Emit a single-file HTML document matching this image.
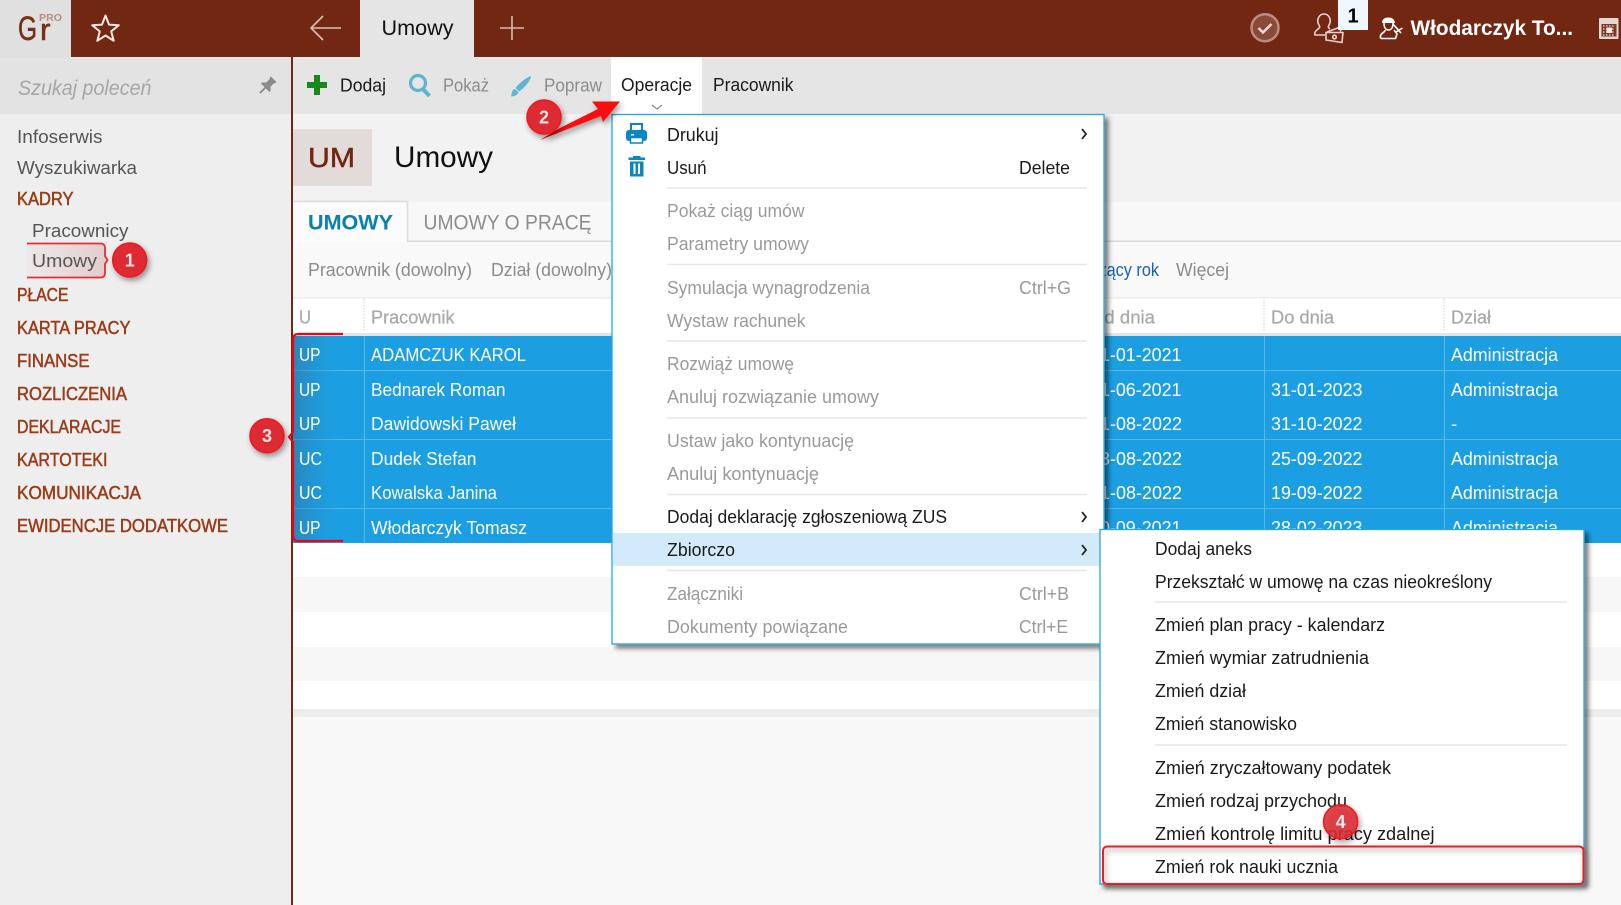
<!DOCTYPE html>
<html lang="pl"><head><meta charset="utf-8"><title>Umowy</title>
<style>
html,body{margin:0;padding:0;background:#f8f8f8;overflow:hidden}
svg{display:block}
text{font-family:"Liberation Sans",sans-serif;font-size:18.5px;fill:#1a1a1a}
.g{fill:#8b8b8b}.d{fill:#9a9a9a}.s{fill:#9b3b17;stroke:#9b3b17;stroke-width:.5px;font-size:18px}
.n{fill:#555}.w{fill:#fff}.h{fill:#a8a8a8;stroke:#a8a8a8;stroke-width:.25px}
.b{fill:#fbe6e6;font-size:18px;font-weight:700;text-anchor:middle}
</style></head><body>
<svg xmlns="http://www.w3.org/2000/svg" width="1621" height="905" viewBox="0 0 1621 905">
<defs>
<filter id="ms" x="-5%" y="-5%" width="112%" height="112%"><feDropShadow dx="4" dy="4" stdDeviation="2.5" flood-color="#000" flood-opacity=".5"/></filter>
<filter id="bs" x="-40%" y="-40%" width="190%" height="190%"><feDropShadow dx="2" dy="3" stdDeviation="3" flood-color="#000" flood-opacity=".4"/></filter>
<linearGradient id="br" x1="0" x2="1" y1="0" y2="0"><stop offset="0" stop-color="#3a6f9a" stop-opacity=".55"/><stop offset="1" stop-color="#1b9fe2" stop-opacity="0"/></linearGradient>
<linearGradient id="cu" x1="0" x2="1" y1="0" y2="0"><stop offset="0" stop-color="#d9b3b3" stop-opacity=".1"/><stop offset="1" stop-color="#d9a8a8" stop-opacity=".5"/></linearGradient>
</defs>

<!-- base -->
<rect width="1621" height="905" fill="#f8f8f8"/>
<rect y="57" width="291" height="848" fill="#eeeeee"/>
<rect y="57" width="291" height="57" fill="#e3e3e3"/>
<rect x="291" y="57" width="2" height="848" fill="#722712"/>
<rect x="293" y="57" width="1328" height="57" fill="#e5e5e5"/>
<rect x="293" y="114" width="1328" height="88" fill="#f2f2f2"/>

<!-- top bar -->
<rect width="1621" height="57" fill="#722712"/>
<rect width="71" height="57" fill="#e0e0e0"/>
<rect x="360" width="114" height="57" fill="#e5e5e5"/>
<text x="18" y="40" textLength="19" lengthAdjust="spacingAndGlyphs" style="font-size:34px;fill:#7a3018;stroke:#7a3018;stroke-width:.6px">G</text>
<text x="40" y="40" textLength="10.500" lengthAdjust="spacingAndGlyphs" style="font-size:31px;fill:#7a3018;stroke:#7a3018;stroke-width:.6px">r</text>
<text x="39" y="21" textLength="23" lengthAdjust="spacingAndGlyphs" style="font-size:10.500px;fill:#b58c81;font-weight:700">PRO</text>
<polygon points="105.500,15.500 109,24.600 118.800,25.200 111.200,31.400 113.700,40.800 105.500,35.500 97.300,40.800 99.800,31.400 92.200,25.200 102,24.600" fill="none" stroke="#f4e8e3" stroke-width="2" stroke-linejoin="round"/>
<path d="M341 28H311M323 16L311 28L323 40" fill="none" stroke="#dcbfb4" stroke-width="1.600"/>
<text x="381.500" y="35" textLength="72" lengthAdjust="spacingAndGlyphs" style="font-size:21px;fill:#111">Umowy</text>
<path d="M512 16V40M500 28H524" stroke="#d8bbae" stroke-width="1.600" fill="none"/>
<circle cx="1265" cy="27.700" r="13.500" fill="#8b4a37" stroke="#b98d80" stroke-width="2.500"/>
<path d="M1258.500 28l4.500 4.500 8.500-8.500" fill="none" stroke="#e6dcd8" stroke-width="2.500"/>
<g fill="none" stroke="#e8d2cb" stroke-width="1.600">
<path d="M1319 25c-3-5 0-11 5-11s8 6 5 11c-1 2-1 3 1 4"/>
<path d="M1319 25c1 2 1 3-1 4-2 2-4 3-3 6h10"/>
<path d="M1327 32l12-4.500 2 4"/>
<path d="M1326 32.500l17 0 -1 10 -16-2.500z" fill="#722712"/>
<circle cx="1334.500" cy="37" r="1.800"/>
</g>
<rect x="1338" y="0" width="30" height="30" fill="#eef7fd"/>
<text x="1353" y="22.500" text-anchor="middle" style="font-size:20px;font-weight:700;fill:#000">1</text>
<path d="M1382 23c0-4 3-5.500 6.500-5.500s6 1.500 6.500 5.500z" fill="#fff"/>
<g fill="none" stroke="#fff" stroke-width="1.600">
<path d="M1384 23c0 4 1.500 7 4.500 7s4.500-3 4.500-7"/>
<path d="M1385 30c0 2-2 2.500-3.500 4-1.500 1.500-1.500 4 0 4.500h14l1.500-4.500-3-4"/>
<path d="M1393 24l8 9M1396 32l6.500-4"/>
</g>
<text x="1410.500" y="35" textLength="162.500" lengthAdjust="spacingAndGlyphs" style="font-size:21px;font-weight:700;fill:#fff">Włodarczyk To...</text>
<rect x="1599" y="18" width="19.500" height="21" rx="1" fill="#e4d7d2"/>
<rect x="1601.500" y="24" width="15" height="12.500" fill="#7a3a28"/>
<path d="M1603 26h12M1603 29h12M1603 32h12M1603 35h12" stroke="#d9c4bc" stroke-width="1.400" stroke-dasharray="1.500 1.500" fill="none"/>
<rect x="1606.500" y="27.500" width="5.500" height="5.500" fill="#efe6e2"/>

<!-- sidebar -->
<text x="18" y="95" textLength="133.500" lengthAdjust="spacingAndGlyphs" style="font-size:21px;font-style:italic;fill:#a6a6a6">Szukaj poleceń</text>
<g transform="translate(267 86) rotate(45)" fill="#8a8a8a"><path d="M-4-9.500h8v1.500l-1 1v5l3 3v1.500h-12v-1.500l3-3v-5l-1-1z"/><rect x="-.9" y="2" width="1.800" height="8"/></g>
<text x="17" y="143" textLength="85.500" lengthAdjust="spacingAndGlyphs" class="n">Infoserwis</text>
<text x="17" y="174" textLength="120" lengthAdjust="spacingAndGlyphs" class="n">Wyszukiwarka</text>
<text x="17" y="205" textLength="56.500" lengthAdjust="spacingAndGlyphs" class="s">KADRY</text>
<text x="32" y="237" textLength="96.500" lengthAdjust="spacingAndGlyphs" class="n">Pracownicy</text>
<path d="M27 243.500H101a4 4 0 0 1 4 4V256l2.500 4-2.500 4v9.500a4 4 0 0 1-4 4H27z" fill="url(#cu)"/>
<path d="M27 243.500H101a4 4 0 0 1 4 4V256l2.500 4-2.500 4v9.500a4 4 0 0 1-4 4H27" fill="none" stroke="#ee2a2e" stroke-width="1.800"/>
<text x="32" y="267" textLength="65" lengthAdjust="spacingAndGlyphs" class="n">Umowy</text>
<text x="17" y="301" textLength="51.500" lengthAdjust="spacingAndGlyphs" class="s">PŁACE</text>
<text x="17" y="334" textLength="113.500" lengthAdjust="spacingAndGlyphs" class="s">KARTA PRACY</text>
<text x="17" y="367" textLength="72.500" lengthAdjust="spacingAndGlyphs" class="s">FINANSE</text>
<text x="17" y="400" textLength="110" lengthAdjust="spacingAndGlyphs" class="s">ROZLICZENIA</text>
<text x="17" y="433" textLength="104" lengthAdjust="spacingAndGlyphs" class="s">DEKLARACJE</text>
<text x="17" y="466" textLength="90.500" lengthAdjust="spacingAndGlyphs" class="s">KARTOTEKI</text>
<text x="17" y="499" textLength="124" lengthAdjust="spacingAndGlyphs" class="s">KOMUNIKACJA</text>
<text x="17" y="532" textLength="211" lengthAdjust="spacingAndGlyphs" class="s">EWIDENCJE DODATKOWE</text>

<!-- toolbar -->
<path d="M317 75v20M307 85h20" stroke="#17881b" stroke-width="6" fill="none"/>
<text x="340" y="91.500" textLength="46" lengthAdjust="spacingAndGlyphs">Dodaj</text>
<circle cx="418" cy="83" r="7.500" fill="none" stroke="#5fb4d0" stroke-width="3.200"/>
<path d="M423 89l6.500 7" stroke="#5fb4d0" stroke-width="4" fill="none"/>
<text x="443" y="91.500" textLength="46" lengthAdjust="spacingAndGlyphs" class="g">Pokaż</text>
<path d="M531 76c-4 1-13 8-15.500 12l3.500 3.500c5-3 12-11 12-15.500zM515 89c-3 .5-3 3-4 7.500 4 0 7-2 7.500-4.500z" fill="#63b4d3"/>
<text x="544" y="91.500" textLength="58" lengthAdjust="spacingAndGlyphs" class="g">Popraw</text>
<rect x="611" y="57" width="91" height="58" fill="#fff"/>
<text x="621" y="91" textLength="71" lengthAdjust="spacingAndGlyphs">Operacje</text>
<path d="M652 105l5 4 5-4" fill="none" stroke="#888" stroke-width="1.200"/>
<text x="713" y="91" textLength="80.500" lengthAdjust="spacingAndGlyphs">Pracownik</text>

<!-- header -->
<rect x="293" y="129" width="79" height="57" fill="#e2dbd9"/>
<text x="308" y="167" textLength="47" lengthAdjust="spacingAndGlyphs" style="font-size:28px;fill:#722712;stroke:#722712;stroke-width:.5px">UM</text>
<text x="394" y="167" textLength="99" lengthAdjust="spacingAndGlyphs" style="font-size:30px;fill:#111">Umowy</text>

<!-- tabs -->
<rect x="293" y="241" width="1328" height="56" fill="#f9f9f9"/>
<rect x="407" y="240.500" width="1214" height="1.500" fill="#d9d9d9"/>
<rect x="293" y="202" width="114" height="40" fill="#fbfbfb"/>
<path d="M293 201.500H407.500V241" fill="none" stroke="#dcdcdc" stroke-width="1.500"/>
<text x="308" y="229.500" textLength="85" lengthAdjust="spacingAndGlyphs" style="font-size:21px;font-weight:700;fill:#0b7fae">UMOWY</text>
<text x="423.500" y="229.500" textLength="168" lengthAdjust="spacingAndGlyphs" style="font-size:21px;fill:#8d8d8d">UMOWY O PRACĘ</text>
<text x="308" y="276" textLength="164" lengthAdjust="spacingAndGlyphs" class="g">Pracownik (dowolny)</text>
<text x="491" y="276" textLength="121" lengthAdjust="spacingAndGlyphs" class="g">Dział (dowolny)</text>
<text x="1075" y="276" textLength="84" lengthAdjust="spacingAndGlyphs" style="fill:#1660b5">Bieżący rok</text>
<text x="1176" y="276" textLength="53" lengthAdjust="spacingAndGlyphs" class="g">Więcej</text>

<!-- table -->
<rect x="293" y="297" width="1328" height="1.500" fill="#ececec"/>
<rect x="293" y="298.500" width="1328" height="34.500" fill="#fff"/>
<rect x="293" y="333" width="1328" height="3" fill="#e4e4e4"/>
<path d="M364 299v33M1264 299v33M1444 299v33" stroke="#cfcfcf" stroke-dasharray="1.500 1.500" fill="none"/>
<text x="299" y="323.500" textLength="12" lengthAdjust="spacingAndGlyphs" class="h">U</text>
<text x="371" y="323.500" textLength="83.500" lengthAdjust="spacingAndGlyphs" class="h">Pracownik</text>
<text x="1090" y="323.500" textLength="65" lengthAdjust="spacingAndGlyphs" class="h">Od dnia</text>
<text x="1271" y="323.500" textLength="63" lengthAdjust="spacingAndGlyphs" class="h">Do dnia</text>
<text x="1451" y="323.500" textLength="40" lengthAdjust="spacingAndGlyphs" class="h">Dział</text>

<rect x="293" y="336" width="1328" height="207" fill="#1b9fe2"/>
<path d="M293 370.500H1621M293 439.500H1621M293 508.500H1621M364.500 336V543M1264.500 336V543M1444.500 336V543" stroke="#5ab6e9" stroke-width="1" fill="none"/>
<rect x="293" y="336" width="50" height="207" fill="url(#br)"/>

<g class="w">
<text class="w" x="299" y="361" textLength="21.500" lengthAdjust="spacingAndGlyphs">UP</text>
<text class="w" x="299" y="396" textLength="21.500" lengthAdjust="spacingAndGlyphs">UP</text>
<text class="w" x="299" y="430" textLength="21.500" lengthAdjust="spacingAndGlyphs">UP</text>
<text class="w" x="299" y="465" textLength="23" lengthAdjust="spacingAndGlyphs">UC</text>
<text class="w" x="299" y="499" textLength="23" lengthAdjust="spacingAndGlyphs">UC</text>
<text class="w" x="299" y="534" textLength="21.500" lengthAdjust="spacingAndGlyphs">UP</text>
<text class="w" x="371" y="361" textLength="155" lengthAdjust="spacingAndGlyphs">ADAMCZUK KAROL</text>
<text class="w" x="371" y="396" textLength="134.500" lengthAdjust="spacingAndGlyphs">Bednarek Roman</text>
<text class="w" x="371" y="430" textLength="145" lengthAdjust="spacingAndGlyphs">Dawidowski Paweł</text>
<text class="w" x="371" y="465" textLength="105.500" lengthAdjust="spacingAndGlyphs">Dudek Stefan</text>
<text class="w" x="371" y="499" textLength="126" lengthAdjust="spacingAndGlyphs">Kowalska Janina</text>
<text class="w" x="371" y="534" textLength="156" lengthAdjust="spacingAndGlyphs">Włodarczyk Tomasz</text>
<text class="w" x="1090" y="361" textLength="91.500" lengthAdjust="spacingAndGlyphs">01-01-2021</text>
<text class="w" x="1090" y="396" textLength="91.500" lengthAdjust="spacingAndGlyphs">01-06-2021</text>
<text class="w" x="1090" y="430" textLength="92" lengthAdjust="spacingAndGlyphs">01-08-2022</text>
<text class="w" x="1090" y="465" textLength="92" lengthAdjust="spacingAndGlyphs">03-08-2022</text>
<text class="w" x="1090" y="499" textLength="92" lengthAdjust="spacingAndGlyphs">01-08-2022</text>
<text class="w" x="1090" y="534" textLength="91.500" lengthAdjust="spacingAndGlyphs">20-09-2021</text>
<text class="w" x="1271" y="396" textLength="91.500" lengthAdjust="spacingAndGlyphs">31-01-2023</text>
<text class="w" x="1271" y="430" textLength="91.500" lengthAdjust="spacingAndGlyphs">31-10-2022</text>
<text class="w" x="1271" y="465" textLength="91.500" lengthAdjust="spacingAndGlyphs">25-09-2022</text>
<text class="w" x="1271" y="499" textLength="91.500" lengthAdjust="spacingAndGlyphs">19-09-2022</text>
<text class="w" x="1271" y="534" textLength="91.500" lengthAdjust="spacingAndGlyphs">28-02-2023</text>
<text class="w" x="1451" y="361" textLength="107" lengthAdjust="spacingAndGlyphs">Administracja</text>
<text class="w" x="1451" y="396" textLength="107" lengthAdjust="spacingAndGlyphs">Administracja</text>
<text class="w" x="1451" y="430">-</text>
<text class="w" x="1451" y="465" textLength="107" lengthAdjust="spacingAndGlyphs">Administracja</text>
<text class="w" x="1451" y="499" textLength="107" lengthAdjust="spacingAndGlyphs">Administracja</text>
<text class="w" x="1451" y="534" textLength="107" lengthAdjust="spacingAndGlyphs">Administracja</text>
</g>

<rect x="293" y="543" width="1328" height="34" fill="#fff"/>
<rect x="293" y="577" width="1328" height="35" fill="#f7f7f7"/>
<rect x="293" y="612" width="1328" height="35" fill="#fff"/>
<rect x="293" y="647" width="1328" height="34" fill="#f7f7f7"/>
<rect x="293" y="681" width="1328" height="28" fill="#fff"/>
<rect x="293" y="709" width="1328" height="8" fill="#ececec"/>

<!-- bracket 3 -->
<path d="M343 334H298a5 5 0 0 0-5 5V432l-4 5 4 5V536a5 5 0 0 0 5 5H343" fill="none" stroke="#f5000f" stroke-width="2.200"/>

<!-- main menu -->
<rect x="612" y="114.500" width="492" height="529.500" fill="#fff" stroke="#2aa3e0" stroke-width="1.300" filter="url(#ms)"/>
<rect x="613" y="533" width="490" height="33" fill="#d3eafa"/>
<g fill="#0b86c1">
<rect x="631" y="124" width="11" height="7" fill="#fff" stroke="#0b86c1" stroke-width="2"/>
<rect x="626" y="130" width="21" height="11" rx="3"/>
<rect x="630.500" y="137.500" width="12" height="5.500" fill="#fff" stroke="#0b86c1" stroke-width="1.500"/>
<rect x="631" y="134" width="3" height="1.500" fill="#fff"/>
<rect x="628.500" y="157.500" width="16.500" height="2.500"/><rect x="633" y="156" width="7.500" height="2"/>
<path d="M630 161.500h13.500v15h-13.500z"/>
</g>
<path d="M634.500 163.500v10.500M639 163.500v10.500" stroke="#fff" stroke-width="2"/>
<path d="M1082 129l4 5-4 5M1082 512l4 5-4 5M1082 545l4 5-4 5" fill="none" stroke="#222" stroke-width="1.800"/>
<path d="M667 188H1087M667 264.500H1087M667 341H1087M667 418H1087M667 494.500H1087M667 570.500H1087" stroke="#e6e6e6" stroke-width="1.500"/>
<text x="667" y="141" textLength="51.500" lengthAdjust="spacingAndGlyphs">Drukuj</text>
<text x="667" y="174" textLength="39.500" lengthAdjust="spacingAndGlyphs">Usuń</text>
<text x="1019" y="174" textLength="51" lengthAdjust="spacingAndGlyphs">Delete</text>
<text x="667" y="217" textLength="137.500" lengthAdjust="spacingAndGlyphs" class="d">Pokaż ciąg umów</text>
<text x="667" y="250" textLength="142" lengthAdjust="spacingAndGlyphs" class="d">Parametry umowy</text>
<text x="667" y="294" textLength="203" lengthAdjust="spacingAndGlyphs" class="d">Symulacja wynagrodzenia</text>
<text x="1019" y="294" textLength="52" lengthAdjust="spacingAndGlyphs" class="d">Ctrl+G</text>
<text x="667" y="327" textLength="138.500" lengthAdjust="spacingAndGlyphs" class="d">Wystaw rachunek</text>
<text x="667" y="370" textLength="127" lengthAdjust="spacingAndGlyphs" class="d">Rozwiąż umowę</text>
<text x="667" y="403" textLength="212" lengthAdjust="spacingAndGlyphs" class="d">Anuluj rozwiązanie umowy</text>
<text x="667" y="447" textLength="187" lengthAdjust="spacingAndGlyphs" class="d">Ustaw jako kontynuację</text>
<text x="667" y="480" textLength="152" lengthAdjust="spacingAndGlyphs" class="d">Anuluj kontynuację</text>
<text x="667" y="523" textLength="280" lengthAdjust="spacingAndGlyphs">Dodaj deklarację zgłoszeniową ZUS</text>
<text x="667" y="556" textLength="68" lengthAdjust="spacingAndGlyphs">Zbiorczo</text>
<text x="667" y="600" textLength="76" lengthAdjust="spacingAndGlyphs" class="d">Załączniki</text>
<text x="1019" y="600" textLength="50" lengthAdjust="spacingAndGlyphs" class="d">Ctrl+B</text>
<text x="667" y="633" textLength="181" lengthAdjust="spacingAndGlyphs" class="d">Dokumenty powiązane</text>
<text x="1019" y="633" textLength="49" lengthAdjust="spacingAndGlyphs" class="d">Ctrl+E</text>

<!-- submenu -->
<rect x="1100" y="529.500" width="484" height="354.500" fill="#fff" stroke="#2aa3e0" stroke-width="1.300" filter="url(#ms)"/>
<path d="M1155 602H1567M1155 745H1567" stroke="#e6e6e6" stroke-width="1.500"/>
<text x="1155" y="555" textLength="97" lengthAdjust="spacingAndGlyphs">Dodaj aneks</text>
<text x="1155" y="588" textLength="337" lengthAdjust="spacingAndGlyphs">Przekształć w umowę na czas nieokreślony</text>
<text x="1155" y="631" textLength="230" lengthAdjust="spacingAndGlyphs">Zmień plan pracy - kalendarz</text>
<text x="1155" y="664" textLength="214" lengthAdjust="spacingAndGlyphs">Zmień wymiar zatrudnienia</text>
<text x="1155" y="697" textLength="91" lengthAdjust="spacingAndGlyphs">Zmień dział</text>
<text x="1155" y="730" textLength="142" lengthAdjust="spacingAndGlyphs">Zmień stanowisko</text>
<text x="1155" y="774" textLength="236" lengthAdjust="spacingAndGlyphs">Zmień zryczałtowany podatek</text>
<text x="1155" y="807" textLength="192" lengthAdjust="spacingAndGlyphs">Zmień rodzaj przychodu</text>
<text x="1155" y="840" textLength="279.500" lengthAdjust="spacingAndGlyphs">Zmień kontrolę limitu pracy zdalnej</text>
<text x="1155" y="873" textLength="183" lengthAdjust="spacingAndGlyphs">Zmień rok nauki ucznia</text>

<!-- annotations -->
<rect x="1103" y="846.500" width="480.500" height="37.500" rx="4" fill="none" stroke="#ee1c24" stroke-width="2" filter="url(#bs)"/>
<g filter="url(#bs)"><polygon points="540,140 558,129 598,109 592,101.500 620,101.500 603,122 601,116" fill="#fa0a10"/></g>
<g filter="url(#bs)"><circle cx="129.700" cy="260" r="17" fill="#de2c31" stroke="#f0171d" stroke-width="1.500"/></g>
<text class="b" x="129.700" y="266.500">1</text>
<g filter="url(#bs)"><circle cx="544" cy="117" r="17" fill="#de2c31" stroke="#f0171d" stroke-width="1.500"/></g>
<text class="b" x="544" y="123.500">2</text>
<g filter="url(#bs)"><circle cx="267" cy="435.700" r="17" fill="#de2c31" stroke="#f0171d" stroke-width="1.500"/></g>
<text class="b" x="267" y="442">3</text>
<g filter="url(#bs)"><circle cx="1340.600" cy="821.700" r="17" fill="#de2c31" fill-opacity=".85" stroke="#f0171d" stroke-width="1.500"/></g>
<text class="b" x="1340.600" y="828">4</text>
</svg>
</body></html>
